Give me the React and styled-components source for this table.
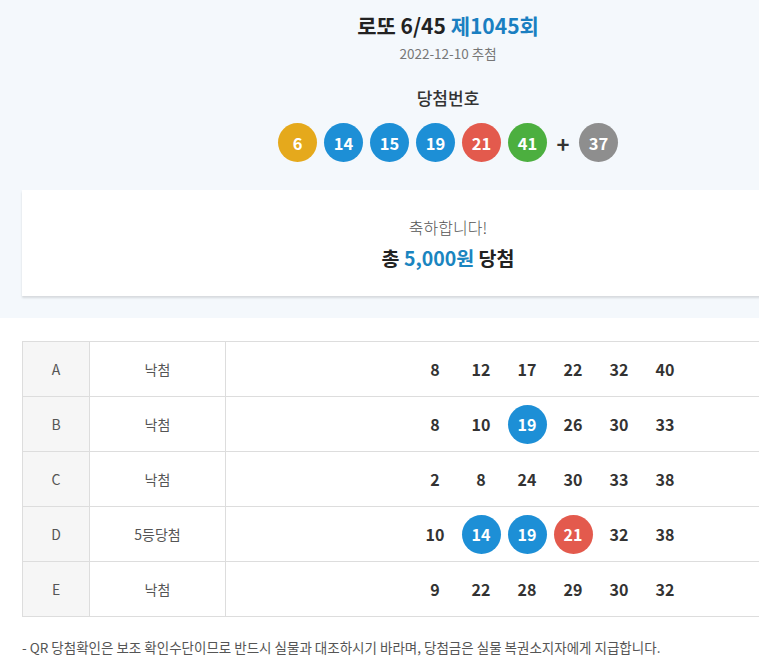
import React from "react"
import styled, { createGlobalStyle } from "styled-components"

const Global = createGlobalStyle`
  body {
    margin: 0;
    background: #fff;
    overflow-x: hidden;
    font-family: "Noto Sans CJK KR", "Noto Sans", sans-serif;
    color: #333;
  }
`

const BALL = {
  yellow: "#e5a91c",
  blue: "#1d8fd6",
  red: "#e35a4d",
  green: "#4caf3f",
  gray: "#8e8e8e",
}

const ballColor = (n) => {
  if (n <= 10) return BALL.yellow
  if (n <= 20) return BALL.blue
  if (n <= 30) return BALL.red
  if (n <= 40) return BALL.gray
  return BALL.green
}

const Page = styled.div`
  width: 896px;
`

const Top = styled.section`
  background-color: #f4f8fc;
  padding: 10px 22px 22px;
  display: flex;
  flex-direction: column;
  align-items: center;
`

const Title = styled.h1`
  margin: 0;
  font-size: 21px;
  line-height: 30px;
  font-weight: 700;
  color: #222;
  span {
    color: #1a7fc1;
  }
`

const DrawDate = styled.div`
  margin-top: 3px;
  font-size: 13.5px;
  line-height: 20px;
  color: #777;
`

const Label = styled.div`
  margin-top: 23px;
  font-size: 17px;
  line-height: 24px;
  font-weight: 500;
  color: #333;
`

const Balls = styled.div`
  margin-top: 13px;
  display: flex;
  align-items: center;
  gap: 7px;
`

const Ball = styled.span`
  width: 39px;
  height: 39px;
  border-radius: 50%;
  background-color: ${(p) => p.$color};
  color: #fff;
  font-size: 16.5px;
  font-weight: 700;
  display: flex;
  align-items: center;
  justify-content: center;
`

const Plus = styled.span`
  width: 18px;
  text-align: center;
  font-size: 22px;
  font-weight: 700;
  color: #333;
`

const Card = styled.div`
  align-self: stretch;
  margin-top: 28px;
  background: #fff;
  box-shadow: 0 2px 2px rgba(0, 0, 0, 0.12);
  padding: 24px 0;
  display: flex;
  flex-direction: column;
  align-items: center;
  gap: 4px;
`

const Congrats = styled.div`
  font-size: 16px;
  line-height: 26px;
  font-weight: 300;
  color: #555;
`

const Prize = styled.div`
  font-size: 19.5px;
  line-height: 28px;
  font-weight: 700;
  color: #222;
  span {
    color: #1a85c0;
  }
`

const Table = styled.div`
  margin: 23px 22px 0;
  border-top: 1px solid #ddd;
  border-left: 1px solid #ddd;
`

const Row = styled.div`
  display: grid;
  grid-template-columns: 67px 136px 1fr;
  height: 54px;
  border-bottom: 1px solid #ddd;
`

const Cell = styled.div`
  display: flex;
  align-items: center;
  justify-content: center;
  border-right: 1px solid #ddd;
  font-size: 14px;
  color: #555;
  background: ${(p) => (p.$head ? "#f6f6f6" : "#fff")};
  &:last-child {
    border-right: none;
  }
`

const Numbers = styled.div`
  display: flex;
  align-items: center;
  justify-content: center;
  gap: 7px;
  width: 100%;
`

const Num = styled.span`
  width: 39px;
  height: 39px;
  border-radius: 50%;
  display: flex;
  align-items: center;
  justify-content: center;
  font-size: 16px;
  font-weight: 700;
  color: ${(p) => (p.$color ? "#fff" : "#333")};
  background: ${(p) => p.$color || "transparent"};
`

const Note = styled.p`
  margin: 20px 22px 0;
  font-size: 13.5px;
  line-height: 20px;
  color: #555;
`

const winning = [6, 14, 15, 19, 21, 41]
const bonus = 37

const games = [
  { id: "A", result: "낙첨", nums: [8, 12, 17, 22, 32, 40] },
  { id: "B", result: "낙첨", nums: [8, 10, 19, 26, 30, 33] },
  { id: "C", result: "낙첨", nums: [2, 8, 24, 30, 33, 38] },
  { id: "D", result: "5등당첨", nums: [10, 14, 19, 21, 32, 38] },
  { id: "E", result: "낙첨", nums: [9, 22, 28, 29, 30, 32] },
]

export default function App() {
  return (
    <Page>
      <Global />
      <Top>
        <Title>
          로또 6/45 <span>제1045회</span>
        </Title>
        <DrawDate>2022-12-10 추첨</DrawDate>
        <Label>당첨번호</Label>
        <Balls>
          {winning.map((n) => (
            <Ball key={n} $color={ballColor(n)}>
              {n}
            </Ball>
          ))}
          <Plus>+</Plus>
          <Ball $color={BALL.gray}>{bonus}</Ball>
        </Balls>
        <Card>
          <Congrats>축하합니다!</Congrats>
          <Prize>
            총 <span>5,000원</span> 당첨
          </Prize>
        </Card>
      </Top>
      <Table>
        {games.map((g) => (
          <Row key={g.id}>
            <Cell $head>{g.id}</Cell>
            <Cell>{g.result}</Cell>
            <Cell>
              <Numbers>
                {g.nums.map((n) => (
                  <Num key={n} $color={winning.includes(n) ? ballColor(n) : null}>
                    {n}
                  </Num>
                ))}
              </Numbers>
            </Cell>
          </Row>
        ))}
      </Table>
      <Note>- QR 당첨확인은 보조 확인수단이므로 반드시 실물과 대조하시기 바라며, 당첨금은 실물 복권소지자에게 지급합니다.</Note>
    </Page>
  )
}
